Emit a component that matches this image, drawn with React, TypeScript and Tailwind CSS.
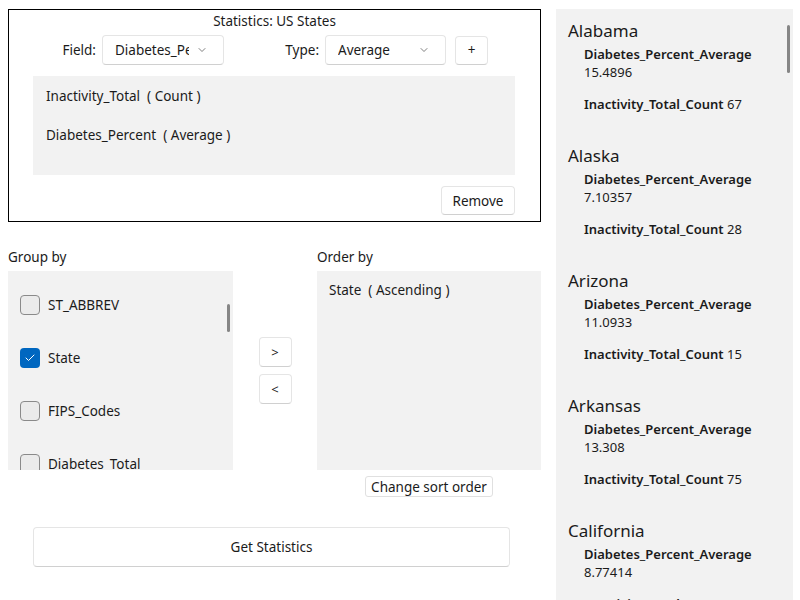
import { ChevronDown, Check } from 'lucide-react'

const FONT = "font-['Segoe_UI','Noto_Sans',sans-serif]"

const groupFields = [
  { name: 'ST_ABBREV', checked: false },
  { name: 'State', checked: true },
  { name: 'FIPS_Codes', checked: false },
  { name: 'Diabetes_Total', checked: false },
]

const results = [
  { state: 'Alabama', avg: '15.4896', count: 67 },
  { state: 'Alaska', avg: '7.10357', count: 28 },
  { state: 'Arizona', avg: '11.0933', count: 15 },
  { state: 'Arkansas', avg: '13.308', count: 75 },
  { state: 'California', avg: '8.77414', count: 59 },
]

function Combo({ value, width, textWidth }: { value: string; width: string; textWidth: string }) {
  return (
    <div
      className={`${width} h-[30px] flex items-center justify-between pl-[12px] pr-[15px] bg-white border border-[#e5e5e5] border-b-[#d0d0d0] rounded-[4px]`}
    >
      <span className={`${textWidth} overflow-hidden whitespace-nowrap`}>{value}</span>
      <ChevronDown size={12} strokeWidth={1.5} className="text-[#555]" />
    </div>
  )
}

function Btn({ children, className = '' }: { children: React.ReactNode; className?: string }) {
  return (
    <div
      className={`flex items-center justify-center bg-white border border-[#e5e5e5] border-b-[#d0d0d0] rounded-[4px] ${className}`}
    >
      {children}
    </div>
  )
}

export default function App() {
  return (
    <div className={`${FONT} w-[800px] h-[600px] overflow-hidden bg-white text-[#1b1b1b] text-[13.5px] leading-[20px] flex`}>
      {/* left side */}
      <div className="w-[533px] ml-[8px] pt-[9px] flex flex-col">
        <div className="border border-black h-[213px] flex flex-col">
          <div className="text-center pt-[1px]">Statistics: US States</div>
          <div className="flex items-center mt-[4px]">
            <span className="w-[93px] text-right pr-[6px]">Field:</span>
            <Combo value="Diabetes_Pe" width="w-[122px]" textWidth="w-[74px]" />
            <span className="w-[101px] text-right pr-[6px]">Type:</span>
            <Combo value="Average" width="w-[121px]" textWidth="w-[74px]" />
            <Btn className="ml-[9px] w-[33px] h-[29px]">+</Btn>
          </div>
          <div className="mt-[11px] ml-[24px] mr-[25px] h-[99px] bg-[#f2f2f2] pl-[13px]">
            <div className="h-[39px] flex items-center">Inactivity_Total&nbsp;&nbsp;( Count )</div>
            <div className="h-[40px] flex items-center">Diabetes_Percent&nbsp;&nbsp;( Average )</div>
          </div>
          <div className="flex justify-end mr-[25px] mt-[11px]">
            <Btn className="w-[74px] h-[29px]">Remove</Btn>
          </div>
        </div>

        <div className="flex mt-[25px]">
          <div className="w-[225px]">
            <div className="h-[20px]">Group by</div>
            <div className="relative mt-[4px] h-[199px] bg-[#f2f2f2] overflow-hidden pt-[7px]">
              {groupFields.map(f => (
                <div key={f.name} className="h-[53px] flex items-center pl-[12px]">
                  {f.checked ? (
                    <div className="w-[20px] h-[20px] rounded-[4px] bg-[#0067c0] flex items-center justify-center">
                      <Check size={12} strokeWidth={2} className="text-white" />
                    </div>
                  ) : (
                    <div className="w-[20px] h-[20px] rounded-[4px] bg-[#ebebeb] border border-[#8a8a8a]" />
                  )}
                  <span className="ml-[8px]">{f.name}</span>
                </div>
              ))}
              <div className="absolute left-[219px] top-[33px] w-[3px] h-[28px] rounded-full bg-[#868686]" />
            </div>
          </div>

          <div className="w-[84px] mt-[24px] h-[199px] flex flex-col items-center justify-center gap-[7px]">
            <Btn className="w-[33px] h-[30px] text-[13px]">&gt;</Btn>
            <Btn className="w-[33px] h-[30px] text-[13px]">&lt;</Btn>
          </div>

          <div className="w-[224px] flex flex-col">
            <div className="h-[20px]">Order by</div>
            <div className="mt-[4px] h-[199px] bg-[#f2f2f2] pl-[12px] pt-[9px]">State&nbsp;&nbsp;( Ascending )</div>
            <div className="flex justify-center mt-[6px]">
              <div className="h-[21px] px-[5px] flex items-center bg-white border border-[#e0e0e0] rounded-[3px]">
                Change sort order
              </div>
            </div>
          </div>
        </div>

        <Btn className="ml-[25px] mt-[30px] w-[477px] h-[40px]">Get Statistics</Btn>
      </div>

      {/* results */}
      <div className="relative ml-[15px] mt-[9px] w-[237px] h-[600px] bg-[#f2f2f2] overflow-hidden pl-[12px] pt-[10px]">
        {results.map(r => (
          <div key={r.state} className="h-[125px]">
            <div className="text-[17px] leading-[24px]">{r.state}</div>
            <div className="pl-[16px] mt-[2px] text-[13px] leading-[18px]">
              <div className="font-semibold">Diabetes_Percent_Average</div>
              <div>{r.avg}</div>
              <div className="mt-[14px]">
                <span className="font-semibold">Inactivity_Total_Count</span> {r.count}
              </div>
            </div>
          </div>
        ))}
        <div className="absolute left-[231px] top-[16px] w-[3px] h-[48px] rounded-full bg-[#868686]" />
      </div>
    </div>
  )
}
